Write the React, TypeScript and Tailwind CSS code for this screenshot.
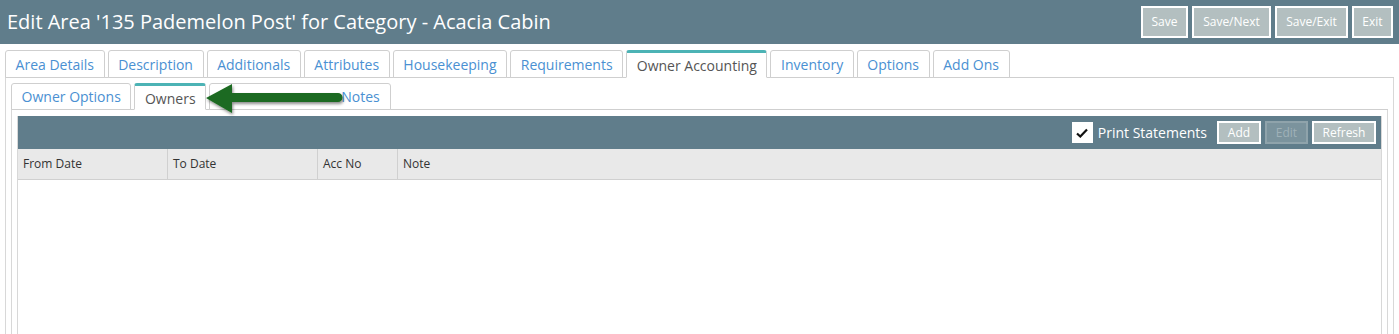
import React from "react";

const topTabs = [
  "Area Details",
  "Description",
  "Additionals",
  "Attributes",
  "Housekeeping",
  "Requirements",
  "Owner Accounting",
  "Inventory",
  "Options",
  "Add Ons",
];

function Tab({
  label,
  active,
  h,
  pad = "px-[9.6px]",
}: {
  label: string;
  active: boolean;
  h: string;
  pad?: string;
}) {
  return (
    <div
      className={
        "-mb-px flex items-center rounded-t-[3px] border border-[#cfcfcf] bg-white text-[14px] " +
        pad +
        " " +
        h +
        " " +
        (active
          ? "border-b-white border-t-[3px] border-t-[#4cb3b5] pt-[1px] text-[#555555]"
          : "text-[#4a90d2]")
      }
    >
      {label}
    </div>
  );
}

function HeadBtn({ label, w }: { label: string; w: string }) {
  return (
    <div
      className={
        "flex h-[32px] items-center justify-center border-2 border-white bg-[#b3bfc0] text-[12px] text-white " + w
      }
    >
      {label}
    </div>
  );
}

export default function App() {
  return (
    <div
      className="relative h-[334px] w-[1399px] overflow-hidden bg-white"
      style={{ fontFamily: "'Open Sans', 'Noto Sans', sans-serif" }}
    >
      {/* header */}
      <div className="flex h-[44px] items-center justify-between bg-[#607d8b] pl-[7px] pr-[6px]">
        <div className="text-[20px] leading-none text-white">
          Edit Area '135 Pademelon Post' for Category - Acacia Cabin
        </div>
        <div className="flex gap-[4px]">
          <HeadBtn label="Save" w="w-[47px]" />
          <HeadBtn label="Save/Next" w="w-[79px]" />
          <HeadBtn label="Save/Exit" w="w-[73px]" />
          <HeadBtn label="Exit" w="w-[41px]" />
        </div>
      </div>

      <div className="px-[5px] pt-[6px]">
        {/* top tabs */}
        <div className="flex gap-[3px] border-b border-[#cfcfcf]">
          {topTabs.map((t) => (
            <Tab key={t} label={t} active={t === "Owner Accounting"} h="h-[28px]" />
          ))}
        </div>

        {/* outer panel */}
        <div className="h-[260px] border-x border-[#d8d8d8] px-[5px] pt-[5px]">
          <div className="flex gap-[3px] border-b border-[#cfcfcf]">
            <Tab label="Owner Options" active={false} h="h-[27px]" />
            <Tab label="Owners" active={true} h="h-[27px]" />
            <Tab label="Notes" active={false} h="h-[27px]" pad="pl-[131px] pr-[10px]" />
          </div>

          {/* inner panel */}
          <div className="h-[230px] border-x border-[#d8d8d8] px-[5px] pt-[6px]">
            <div className="h-[220px] border-x border-[#d8d8d8]">
              {/* toolbar */}
              <div className="flex h-[33px] items-center justify-end bg-[#607d8b] pr-[5px]">
                <div className="mr-[5px] flex h-[21px] w-[21px] items-center justify-center bg-white">
                  <svg width="12" height="10" viewBox="0 0 12 10">
                    <path d="M1 5.5 L4.3 8.5 L11 1.5" fill="none" stroke="#111" strokeWidth="2.2" />
                  </svg>
                </div>
                <div className="mr-[10px] text-[14px] text-white">Print Statements</div>
                <div className="flex gap-[4px]">
                  <div className="flex h-[23px] w-[44px] items-center justify-center border-2 border-white bg-[#b3bfc0] text-[12px] text-white">
                    Add
                  </div>
                  <div className="flex h-[23px] w-[43px] items-center justify-center border-2 border-[#8fa3ab] bg-[#7b939d] text-[12px] text-[#9fb1b8]">
                    Edit
                  </div>
                  <div className="flex h-[23px] w-[64px] items-center justify-center border-2 border-white bg-[#b3bfc0] text-[12px] text-white">
                    Refresh
                  </div>
                </div>
              </div>
              {/* header row */}
              <div className="flex h-[31px] border-b border-[#d0d0d0] bg-[#e9e9e9] text-[12px] text-[#333333]">
                <div className="flex w-[150px] items-center border-r border-[#d0d0d0] pl-[5px]">From Date</div>
                <div className="flex w-[150px] items-center border-r border-[#d0d0d0] pl-[5px]">To Date</div>
                <div className="flex w-[80px] items-center border-r border-[#d0d0d0] pl-[5px]">Acc No</div>
                <div className="flex flex-1 items-center pl-[5px]">Note</div>
              </div>
            </div>
          </div>
        </div>
      </div>

      {/* green arrow overlay */}
      <svg
        className="absolute left-[196px] top-[80px]"
        width="160"
        height="44"
        viewBox="0 0 160 44"
      >
        <defs>
          <filter id="sh" x="-20%" y="-40%" width="140%" height="180%">
            <feDropShadow dx="1" dy="2" stdDeviation="1.6" floodColor="#000" floodOpacity="0.45" />
          </filter>
        </defs>
        <g filter="url(#sh)">
          <path d="M10 18 L36 4 L36 13 L142 13 A4.5 4.5 0 0 1 142 22 L36 22 L36 33 Z" fill="#1b6b20" />
        </g>
      </svg>
    </div>
  );
}
